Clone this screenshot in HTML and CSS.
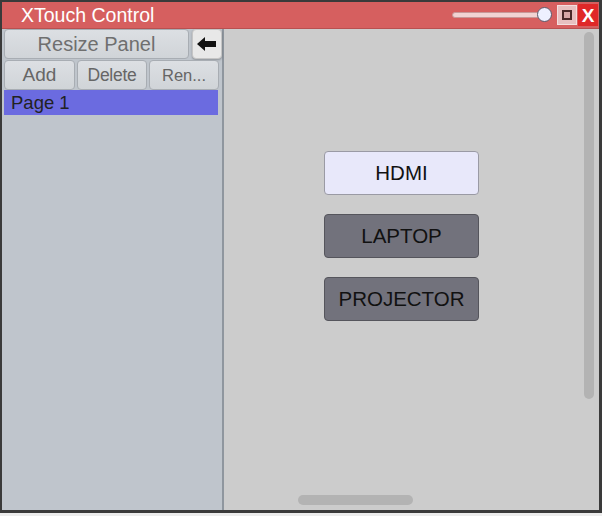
FILE: index.html
```html
<!DOCTYPE html>
<html>
<head>
<meta charset="utf-8">
<link rel="stylesheet" href="styles.css">
</head>
<body>
<div class="window">
  <div class="titlebar">
    <span class="title">XTouch Control</span>
    <div class="controls">
      <div class="slider"><div class="track"></div><div class="knob"></div></div>
      <div class="maxbtn"><div class="sq"></div></div>
      <div class="closebtn">X</div>
    </div>
  </div>
  <div class="body">
    <div class="side">
      <div class="toprow">
        <div class="btn resize">Resize Panel</div>
        <div class="btn arrow">
          <svg width="20" height="14" viewBox="0 0 20 14"><path d="M0 7 L8 0 L8 4 L19 4 L19 10 L8 10 L8 14 Z" fill="#111"/></svg>
        </div>
      </div>
      <div class="btnrow">
        <div class="btn small">Add</div>
        <div class="btn small">Delete</div>
        <div class="btn small">Ren...</div>
      </div>
      <div class="page">Page 1</div>
    </div>
    <div class="main">
      <div class="stack">
        <div class="big light">HDMI</div>
        <div class="big dark">LAPTOP</div>
        <div class="big dark">PROJECTOR</div>
      </div>
      <div class="vscroll"></div>
      <div class="hscroll"></div>
    </div>
  </div>
</div>
</body>
</html>
```
FILE: styles.css
```css
html, body { margin: 0; padding: 0; background: #ececec; }
body { width: 602px; height: 516px; font-family: "Liberation Sans", Arial, sans-serif; }
.window {
  border: 2px solid #3a3a3a;
  border-bottom-width: 3px;
  border-right-width: 3px;
  box-sizing: content-box;
  display: flex; flex-direction: column;
  background: #cccccc;
  width: 597px; height: 508px;
}
.titlebar {
  height: 26px; background: #d65f5f;
  display: flex; align-items: center; justify-content: space-between;
  border-bottom: 1px solid #b85050;
}
.title { color: #fff; font-size: 19.5px; padding-left: 19px; }
.controls { display: flex; align-items: center; height: 100%; margin-right: 1px; }
.slider { position: relative; width: 100px; height: 16px; margin-right: 5px; }
.track { position: absolute; left: 0; top: 5px; width: 90px; height: 6px; border-radius: 3px; background: #f1d3d3; border: 1px solid #c89898; box-sizing: border-box; }
.knob { position: absolute; right: 0; top: 0; width: 15px; height: 15px; border-radius: 50%; background: #eef0ff; border: 1px solid #5a5a6a; box-sizing: border-box; }
.maxbtn { width: 20px; height: 20px; background: #e7c0c0; display: flex; align-items: center; justify-content: center; margin-right: 1px; box-sizing: border-box; border: 1px solid #f3dede; }
.sq { width: 10px; height: 10px; border: 2px solid #4a2a2a; box-sizing: border-box; background: #d8a8a8; }
.closebtn { width: 20px; height: 22px; background: #e02828; color: #fff; font-size: 19px; font-weight: bold; display: flex; align-items: center; justify-content: center; line-height: 1; }
.body { flex: 1; display: flex; }
.side { width: 218px; background: #bfc5cc; border-right: 2px solid #8f969e; padding: 0 0 0 2px; display: flex; flex-direction: column; }
.toprow { display: flex; gap: 3px; height: 30px; }
.btn { background: linear-gradient(#dcdfe3, #d0d4d8); border: 1px solid #a8adb3; border-radius: 4px; box-sizing: border-box; color: #6f6f6f; display: flex; align-items: center; justify-content: center; }
.resize { width: 185px; height: 30px; font-size: 20px; }
.arrow { width: 30px; height: 30px; background: #e8e8e8; border-color: #c5c5c5; box-shadow: 0 1px 2px rgba(0,0,0,0.25); }
.btnrow { display: flex; gap: 2px; margin-top: 1px; height: 30px; }
.small { width: 71px; height: 30px; font-size: 19px; color: #666; }
.btnrow .small:nth-child(2) { width: 70px; font-size: 17.5px; letter-spacing: -0.3px; }
.btnrow .small:nth-child(3) { width: 70px; font-size: 16.5px; }
.page { width: 214px; height: 25px; background: #6b6be0; color: #222; font-size: 18.5px; padding-left: 7px; box-sizing: border-box; line-height: 25px; }
.main { flex: 1; position: relative; }
.stack { display: flex; flex-direction: column; align-items: center; gap: 19px; padding-top: 122px; padding-right: 20px; }
.big { width: 155px; height: 44px; border-radius: 4px; box-sizing: border-box; display: flex; align-items: center; justify-content: center; font-size: 20.5px; color: #111; }
.light { background: #e8e8fa; border: 1px solid #9a9aa4; }
.dark { background: #72727c; border: 1px solid #55555c; }
.vscroll { position: absolute; right: 5px; top: 3px; width: 10px; height: 367px; border-radius: 5px; background: #b3b3b3; }
.hscroll { position: absolute; left: 74px; bottom: 5px; width: 115px; height: 10px; border-radius: 5px; background: #b3b3b3; }
```
